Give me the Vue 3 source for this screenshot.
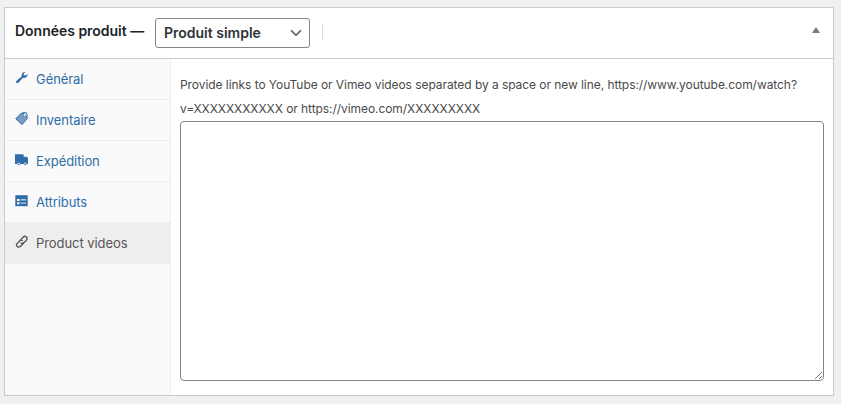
<script setup>
import { ref } from 'vue'

const links = ref('')
const productType = ref('Produit simple')
const active = ref('videos')
const tabs = [
  { id: 'general', label: 'Général' },
  { id: 'inventory', label: 'Inventaire' },
  { id: 'shipping', label: 'Expédition' },
  { id: 'attributes', label: 'Attributs' },
  { id: 'videos', label: 'Product videos' },
]
</script>

<template>
  <main class="page">
    <section class="panel">
      <header class="head">
        <h2 class="title">Données produit —</h2>
        <button class="select" type="button">
          <span>{{ productType }}</span>
          <svg class="chevron" viewBox="0 0 12 8"><path d="M1 1.2 6 6.2 11 1.2" /></svg>
        </button>
        <i class="divider"></i>
        <svg class="toggle" viewBox="0 0 8 6"><path d="M4 0 8 6H0z" /></svg>
      </header>
      <div class="body">
        <nav class="tabs">
          <a v-for="t in tabs" :key="t.id" class="tab" :class="{ active: t.id === active }" @click="active = t.id">
            <svg class="icon" viewBox="0 0 14 14">
              <template v-if="t.id === 'general'">
                <path d="M12.3 3.1 10.3 4.6 8.9 4.2 8.6 2.8 10.4 1.1C8.7.6 6.8 1.8 6.7 3.8L6.8 5.3 1.6 9.7C.1 11.2 1.8 13.1 3.4 11.8L7.9 6.8 9.4 7C11.6 6.8 12.9 5 12.3 3.1Z" />
              </template>
              <template v-else-if="t.id === 'inventory'">
                <path d="M.5 6.8 6.2 1.2 9 1.3 12.4 6.3 7 12.5Z" opacity=".65" />
                <path class="line" d="M.8 6.8 6.3 1.2 9.3 1.6 12.6 6.3 7.1 12.5Z M7.6.7 11.4.7 12.3 4.8" />
                <circle cx="9.9" cy="3" r=".9" fill="#fafafa" />
              </template>
              <template v-else-if="t.id === 'shipping'">
                <path d="M0 1.2H8.6V3.7H12L13 5.2V11.1H11.8A1.5 1.5 0 0 0 8.8 11.1H5.1A1.5 1.5 0 0 0 2.1 11.1H0Z" />
                <circle cx="3.6" cy="11.3" r="1" /><circle cx="10.3" cy="11.3" r="1" />
              </template>
              <template v-else-if="t.id === 'attributes'">
                <path d="M.3 1.2H12.7V12.2H.3Z" />
                <path class="paper" d="M2 5H4.6V7H2Z M2 8.2H4.6V10.2H2Z" />
                <path class="paper" opacity=".65" d="M5.6 5H11.2V6.4H5.6Z M5.6 8.4H11.2V9.8H5.6Z" />
              </template>
              <template v-else>
                <g class="chain" transform="rotate(-45 6.8 6.8)">
                  <path d="M7.7 8.3A2.2 2.2 0 0 1 6 9.1H2.4A2.2 2.2 0 0 1 2.4 4.7H6A2.2 2.2 0 0 1 8.2 6.9" />
                  <path d="M5.9 5.3A2.2 2.2 0 0 1 7.6 4.5H11.2A2.2 2.2 0 0 1 11.2 8.9H7.6A2.2 2.2 0 0 1 5.4 6.7" />
                </g>
              </template>
            </svg>
            <span>{{ t.label }}</span>
          </a>
        </nav>
        <div class="content">
          <label class="help" for="links">Provide links to YouTube or Vimeo videos separated by a space or new line, https://www.youtube.com/watch?<br />v=XXXXXXXXXXX or https://vimeo.com/XXXXXXXXX</label>
          <div class="field">
            <textarea id="links" v-model="links"></textarea>
            <svg class="grip" viewBox="0 0 9 9"><path d="M1 8 8 1 M5 8 8 5" /></svg>
          </div>
        </div>
      </div>
    </section>
  </main>
</template>

<style>
body {
  background: #f0f0f1;
}
</style>

<style scoped>
* {
  box-sizing: border-box;
}
.page {
  height: 404px;
  padding: 7px 7px 8px 4px;
  background: #f0f0f1;
  font-family: Inter, "Liberation Sans", sans-serif;
  font-size: 13px;
}
.panel {
  display: flex;
  flex-direction: column;
  height: 389px;
  border: 1px solid #c9cbcf;
  background: #fff;
}
.head {
  display: flex;
  align-items: center;
  height: 51px;
  flex: none;
  padding: 0 13px 0 10px;
  border-bottom: 1px solid #c9cbcf;
  color: #1d2327;
}
.title {
  width: 140px;
  margin: 0 0 5px;
  font-size: 14px;
  font-weight: 600;
  letter-spacing: -0.02px;
  line-height: 20px;
  white-space: nowrap;
}
.select {
  display: flex;
  align-items: center;
  justify-content: space-between;
  width: 155px;
  height: 30px;
  padding: 0 7px 2px 8px;
  border: 1px solid #7e858d;
  border-radius: 3px;
  background: #fff;
  color: #2c3338;
  font: 600 14px Inter, sans-serif;
  white-space: nowrap;
}
.chevron {
  width: 12px;
  height: 8px;
  margin-top: 1px;
  fill: none;
  stroke: #50575e;
  stroke-width: 1.6;
}
.divider {
  width: 1px;
  height: 15px;
  margin: 0 0 3px 12px;
  background: #dcdcde;
}
.toggle {
  width: 8px;
  height: 6px;
  margin: 0 0 6px auto;
  fill: #787c82;
}
.body {
  display: flex;
  flex: 1;
}
.tabs {
  width: 166px;
  border-right: 1px solid #eee;
  background: #fafafa;
}
.tab {
  display: flex;
  align-items: center;
  height: 41px;
  padding: 0 10px;
  border-bottom: 1px solid #eee;
  color: #2f6da8;
  letter-spacing: -0.07px;
  line-height: 20px;
  cursor: pointer;
  white-space: nowrap;
}
.tab.active {
  background: #eee;
  color: #555;
}
.icon {
  width: 14px;
  height: 14px;
  margin: 0 7px 3px 0;
  fill: currentColor;
}
.line {
  fill: none;
  stroke: currentColor;
  stroke-width: 1;
}
.paper {
  fill: #fafafa;
}
.chain {
  fill: none;
  stroke: currentColor;
  stroke-width: 1.3;
}
.content {
  flex: 1;
  padding: 14px 9px 13px;
}
.help {
  display: block;
  height: 48px;
  color: #4a4a4a;
  font-size: 12px;
  letter-spacing: -0.062px;
  line-height: 24px;
  white-space: nowrap;
}
.field {
  position: relative;
  width: 644px;
  height: 260px;
}
textarea {
  display: block;
  width: 100%;
  height: 100%;
  margin: 0;
  border: 1px solid #7e858d;
  border-radius: 4px;
  background: #fff;
  outline: none;
  resize: none;
}
.grip {
  position: absolute;
  right: 1px;
  bottom: 1px;
  width: 9px;
  height: 9px;
  fill: none;
  stroke: #666;
  stroke-width: 0.9;
}
</style>
